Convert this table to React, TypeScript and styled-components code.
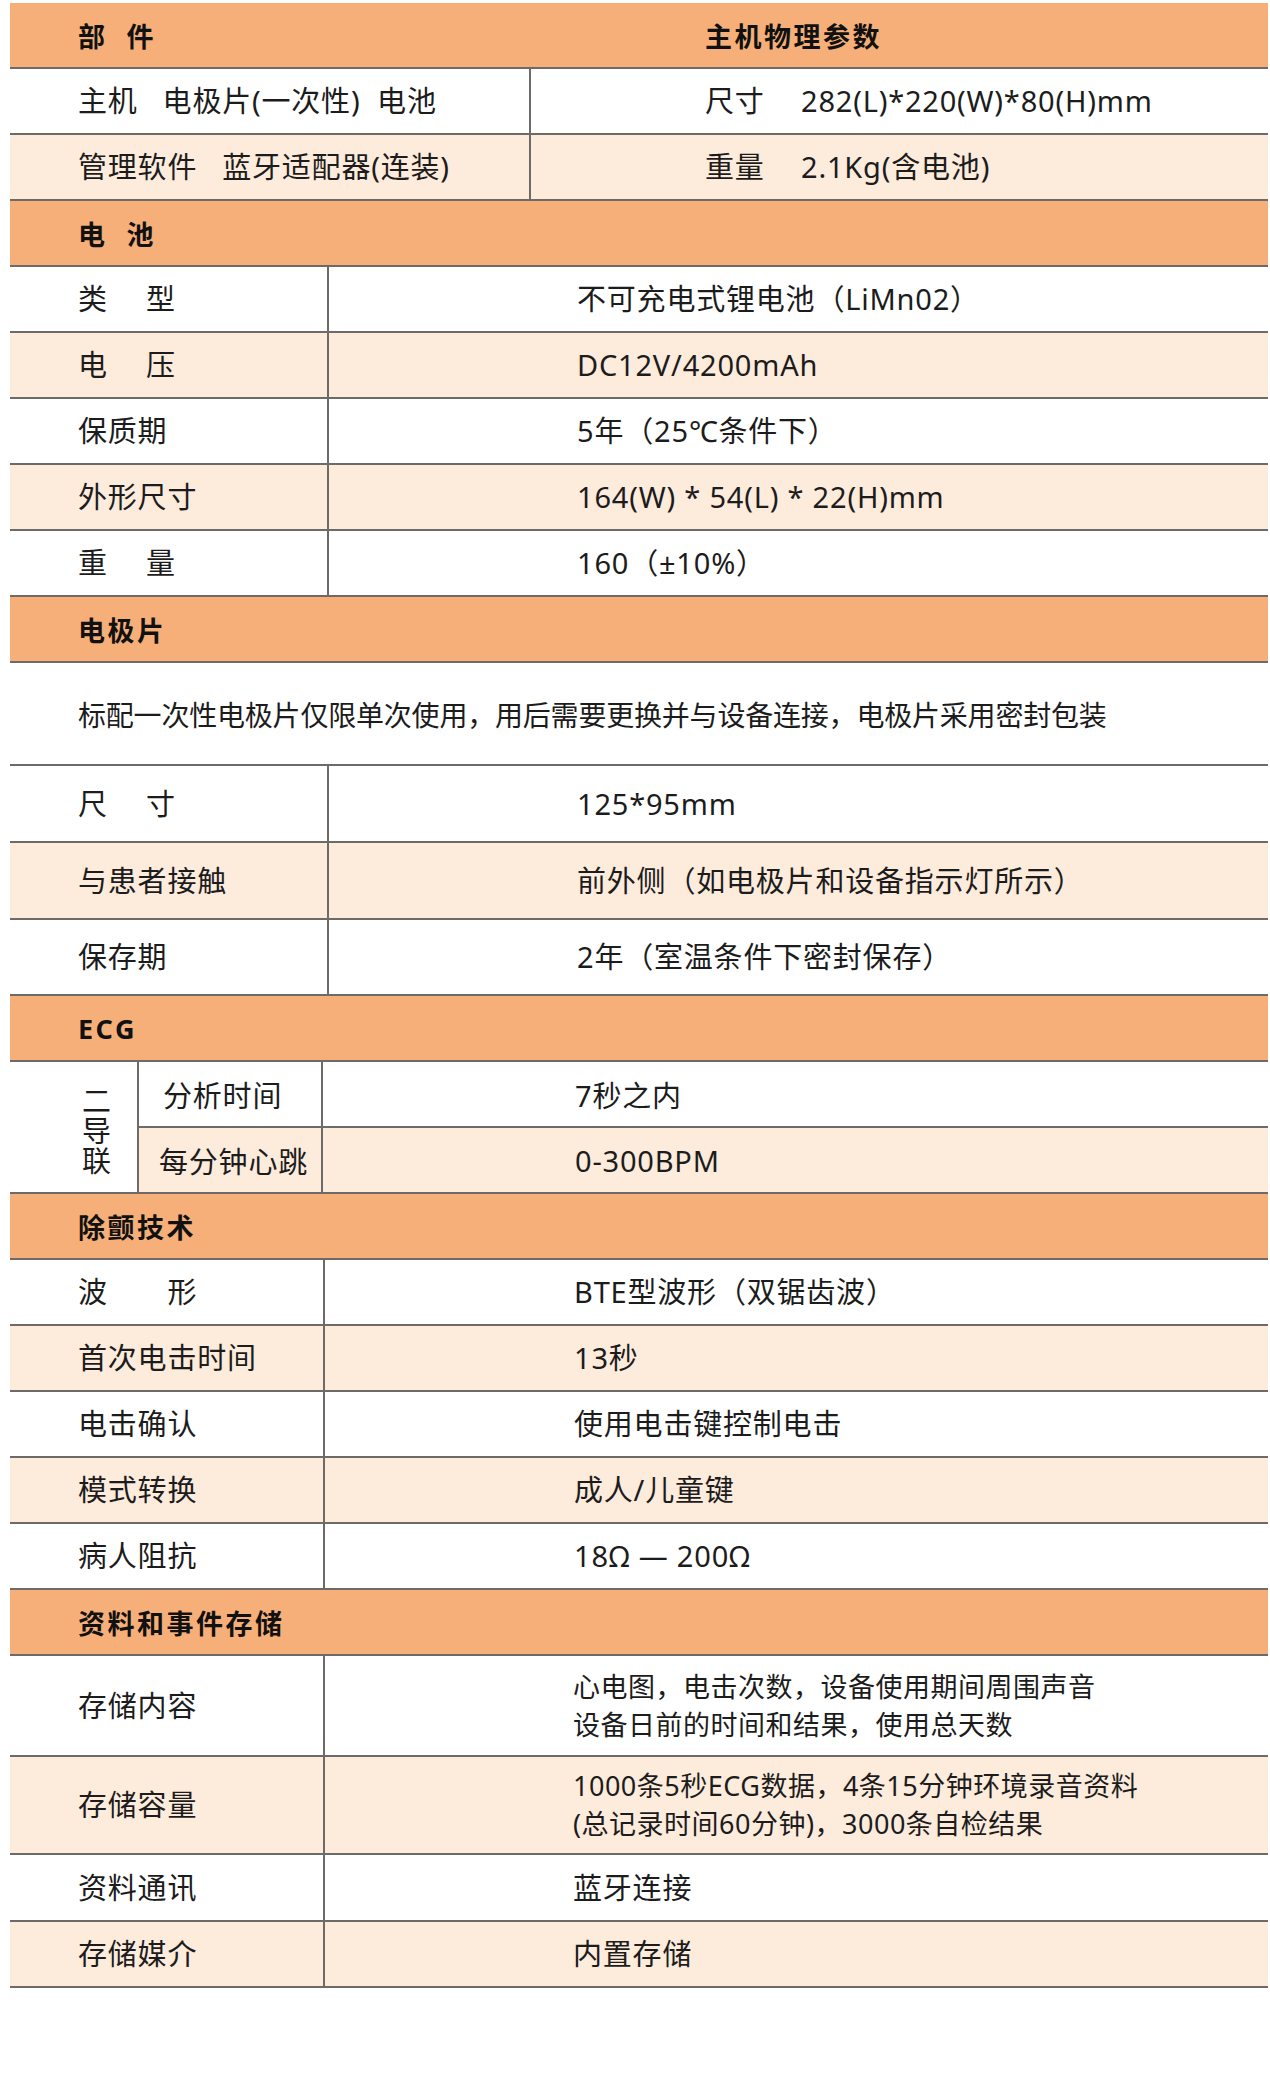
import styled, { createGlobalStyle } from 'styled-components'

const GlobalStyle = createGlobalStyle`
  html, body {
    margin: 0;
    padding: 0;
    background: #ffffff;
  }
  body {
    font-family: "Noto Sans", "Noto Sans CJK SC", sans-serif;
    color: #1c1c1c;
  }
`

const ORANGE = '#f6af79'
const LIGHT = '#fdebdc'
const LINE = '#6e6a67'

type RowProps = {
  $cols: string
  $h: number
  $light?: boolean
}

const Table = styled.div`
  width: 1258px;
  margin-left: 10px;
  padding-top: 3px;
`

const SectionHeader = styled.div<{ $cols?: string }>`
  display: grid;
  grid-template-columns: ${(p) => p.$cols || '1fr'};
  height: 66px;
  box-sizing: border-box;
  background: ${ORANGE};
  border-bottom: 2px solid ${LINE};
  font-size: 27px;
  font-weight: 700;
  letter-spacing: 2.5px;
  color: #111;
  white-space: pre;
`

const HeaderCell = styled.div<{ $pad: number }>`
  display: flex;
  align-items: center;
  padding-left: ${(p) => p.$pad}px;
`

const Row = styled.div<RowProps>`
  display: grid;
  grid-template-columns: ${(p) => p.$cols};
  height: ${(p) => p.$h}px;
  box-sizing: border-box;
  background: ${(p) => (p.$light ? LIGHT : '#ffffff')};
  border-bottom: 2px solid ${LINE};
  font-size: 29px;
  letter-spacing: 0.8px;
  white-space: pre;
`

const Cell = styled.div<{ $pad: number; $divider?: boolean; $small?: boolean }>`
  display: flex;
  flex-direction: column;
  justify-content: center;
  padding-left: ${(p) => p.$pad}px;
  border-right: ${(p) => (p.$divider ? `2px solid ${LINE}` : 'none')};
  line-height: 38px;
  font-size: ${(p) => (p.$small ? '27px' : 'inherit')};
  letter-spacing: ${(p) => (p.$small ? '0.5px' : 'inherit')};
`

const Pair = styled.div`
  display: flex;
  align-items: center;
`

const PairKey = styled.span`
  width: 96px;
  flex: none;
`

const Note = styled.div`
  display: flex;
  align-items: center;
  height: 103px;
  box-sizing: border-box;
  padding-left: 68px;
  border-bottom: 2px solid ${LINE};
  font-size: 28px;
  letter-spacing: -0.2px;
`

const Group = styled.div`
  display: grid;
  grid-template-columns: 129px 184px 1fr;
  grid-template-rows: 66px 66px;
  font-size: 29px;
  letter-spacing: 0.8px;
`

const GroupCell = styled.div<{ $pad: number; $light?: boolean; $divider?: boolean; $span?: boolean }>`
  display: flex;
  align-items: center;
  box-sizing: border-box;
  padding-left: ${(p) => p.$pad}px;
  background: ${(p) => (p.$light ? LIGHT : '#ffffff')};
  border-bottom: 2px solid ${LINE};
  border-right: ${(p) => (p.$divider ? `2px solid ${LINE}` : 'none')};
  grid-row: ${(p) => (p.$span ? 'span 2' : 'auto')};
`

const Stacked = styled.span`
  display: block;
  width: 1em;
  line-height: 30px;
  white-space: normal;
  word-break: break-all;
  margin-top: 8px;
`

type Item = { label: string; value: string | string[]; h?: number }

const battery: Item[] = [
  { label: '类　 型', value: '不可充电式锂电池（LiMn02）' },
  { label: '电　 压', value: 'DC12V/4200mAh' },
  { label: '保质期', value: '5年（25℃条件下）' },
  { label: '外形尺寸', value: '164(W) * 54(L) * 22(H)mm' },
  { label: '重　 量', value: '160（±10%）' },
]

const electrode: Item[] = [
  { label: '尺　 寸', value: '125*95mm', h: 77 },
  { label: '与患者接触', value: '前外侧（如电极片和设备指示灯所示）', h: 77 },
  { label: '保存期', value: '2年（室温条件下密封保存）', h: 76 },
]

const defib: Item[] = [
  { label: '波　　形', value: 'BTE型波形（双锯齿波）' },
  { label: '首次电击时间', value: '13秒' },
  { label: '电击确认', value: '使用电击键控制电击' },
  { label: '模式转换', value: '成人/儿童键' },
  { label: '病人阻抗', value: '18Ω — 200Ω' },
]

const storage: Item[] = [
  {
    label: '存储内容',
    value: ['心电图，电击次数，设备使用期间周围声音', '设备日前的时间和结果，使用总天数'],
    h: 101,
  },
  {
    label: '存储容量',
    value: ['1000条5秒ECG数据，4条15分钟环境录音资料', '(总记录时间60分钟)，3000条自检结果'],
    h: 98,
  },
  { label: '资料通讯', value: '蓝牙连接', h: 67 },
  { label: '存储媒介', value: '内置存储', h: 66 },
]

const Rows = ({ items, cols, pad }: { items: Item[]; cols: string; pad: number }) => (
  <>
    {items.map((it, i) => (
      <Row key={it.label} $cols={cols} $h={it.h || 66} $light={i % 2 === 1}>
        <Cell $pad={68} $divider>
          {it.label}
        </Cell>
        {Array.isArray(it.value) ? (
          <Cell $pad={pad} $small>
            {it.value.map((line) => (
              <div key={line}>{line}</div>
            ))}
          </Cell>
        ) : (
          <Cell $pad={pad}>{it.value}</Cell>
        )}
      </Row>
    ))}
  </>
)

export default function App() {
  return (
    <>
      <GlobalStyle />
      <Table>
        <SectionHeader $cols="521px 1fr">
          <HeaderCell $pad={68}>部  件</HeaderCell>
          <HeaderCell $pad={174}>主机物理参数</HeaderCell>
        </SectionHeader>
        <Row $cols="521px 1fr" $h={66}>
          <Cell $pad={68} $divider>
            主机   电极片(一次性)  电池
          </Cell>
          <Cell $pad={174}>
            <Pair>
              <PairKey>尺寸</PairKey>
              282(L)*220(W)*80(H)mm
            </Pair>
          </Cell>
        </Row>
        <Row $cols="521px 1fr" $h={66} $light>
          <Cell $pad={68} $divider>
            管理软件   蓝牙适配器(连装)
          </Cell>
          <Cell $pad={174}>
            <Pair>
              <PairKey>重量</PairKey>
              2.1Kg(含电池)
            </Pair>
          </Cell>
        </Row>

        <SectionHeader>
          <HeaderCell $pad={68}>电  池</HeaderCell>
        </SectionHeader>
        <Rows items={battery} cols="319px 1fr" pad={248} />

        <SectionHeader>
          <HeaderCell $pad={68}>电极片</HeaderCell>
        </SectionHeader>
        <Note>标配一次性电极片仅限单次使用，用后需要更换并与设备连接，电极片采用密封包装</Note>
        <Rows items={electrode} cols="319px 1fr" pad={248} />

        <SectionHeader>
          <HeaderCell $pad={68}>ECG</HeaderCell>
        </SectionHeader>
        <Group>
          <GroupCell $pad={72} $divider $span>
            <Stacked>二导联</Stacked>
          </GroupCell>
          <GroupCell $pad={24} $divider>
            分析时间
          </GroupCell>
          <GroupCell $pad={252}>7秒之内</GroupCell>
          <GroupCell $pad={20} $divider $light>
            每分钟心跳
          </GroupCell>
          <GroupCell $pad={252} $light>
            0-300BPM
          </GroupCell>
        </Group>

        <SectionHeader>
          <HeaderCell $pad={68}>除颤技术</HeaderCell>
        </SectionHeader>
        <Rows items={defib} cols="315px 1fr" pad={249} />

        <SectionHeader>
          <HeaderCell $pad={68}>资料和事件存储</HeaderCell>
        </SectionHeader>
        <Rows items={storage} cols="315px 1fr" pad={248} />
      </Table>
    </>
  )
}
